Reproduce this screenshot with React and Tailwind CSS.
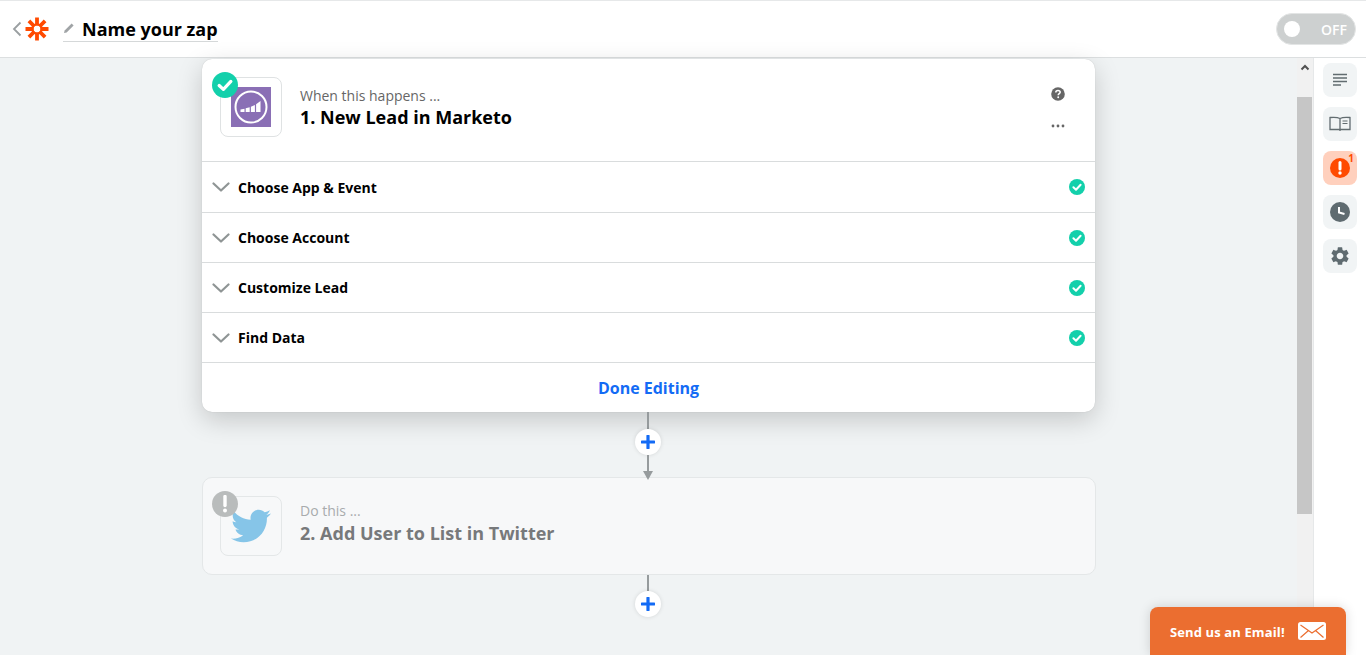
import { FaTwitter } from "react-icons/fa";
import { MdSettings } from "react-icons/md";

const font = { fontFamily: '"Open Sans", sans-serif' };

const ZapierLogo = () => (
  <svg width="24" height="24" viewBox="0 0 24 24">
    <g stroke="#ff4a00" strokeWidth="3.8">
      <path d="M12 0.5V8.5M12 15.5V23.5M0.5 12H8.5M15.5 12H23.5M3.9 3.9L9.5 9.5M14.5 14.5L20.1 20.1M20.1 3.9L14.5 9.5M9.5 14.5L3.9 20.1" />
    </g>
    <circle cx="12" cy="12" r="4.6" fill="none" stroke="#ff4a00" strokeWidth="2.4" />
  </svg>
);

const CheckBadge = ({ size = 16 }) => (
  <svg width={size} height={size} viewBox="0 0 16 16" className="block">
    <circle cx="8" cy="8" r="8" fill="#13d0ab" />
    <path d="M4.4 8.3L7 10.7L11.6 5.8" fill="none" stroke="#fff" strokeWidth="2" strokeLinecap="round" strokeLinejoin="round" />
  </svg>
);

const Chevron = () => (
  <svg width="18" height="10" viewBox="0 0 18 10" className="block">
    <path d="M1.5 1.5L9 8.5L16.5 1.5" fill="none" stroke="#8f9595" strokeWidth="2.2" strokeLinecap="round" strokeLinejoin="round" />
  </svg>
);

const MarketoLogo = () => (
  <div className="w-10 h-10 bg-[#8a6fb5] flex items-center justify-center">
    <svg width="34" height="34" viewBox="0 0 34 34">
      <circle cx="17" cy="17" r="15.5" fill="none" stroke="#fff" strokeWidth="2" />
      <path d="M6.5 19.5L10.5 18.8V22H6.5ZM11.7 18.3L15.7 17.2V22H11.7ZM16.9 16.8L20.9 15V22H16.9ZM22.1 14.2L26.5 11V22H22.1Z" fill="#fff" />
    </svg>
  </div>
);

const PlusButton = () => (
  <div className="w-[26px] h-[26px] shrink-0 rounded-full bg-white flex items-center justify-center shadow-[0_0_4px_rgba(0,0,0,0.12)]">
    <svg width="14" height="14" viewBox="0 0 14 14">
      <path d="M7 1V13M1 7H13" stroke="#136bf5" strokeWidth="3.2" strokeLinecap="round" />
    </svg>
  </div>
);

const SideButton = ({ active, children }) => (
  <div className={`relative w-[34px] h-[34px] rounded-lg flex items-center justify-center ${active ? "bg-[#ffd0bd]" : "bg-[#f1f4f5]"}`}>
    {children}
  </div>
);

const rows = ["Choose App & Event", "Choose Account", "Customize Lead", "Find Data"];

export default function App() {
  return (
    <div style={font} className="relative h-[655px] w-[1366px] overflow-hidden bg-white flex flex-col">
      {/* top bar */}
      <header className="h-[58px] shrink-0 bg-white border-t border-t-[#e6e8e9] border-b border-b-[#dcdfe0] flex items-center pl-[12px] pr-[10px]">
        <svg width="10" height="16" viewBox="0 0 10 16" className="mr-[3px]">
          <path d="M8.5 1.5L2 8L8.5 14.5" fill="none" stroke="#9a9fa1" strokeWidth="1.8" />
        </svg>
        <ZapierLogo />
        <div className="ml-[14px] flex items-center h-[26px] border-b border-[#d5d8d9]">
          <svg width="12" height="12" viewBox="0 0 12 12" className="mr-[7px] mt-[-2px]">
            <path d="M1 11L1.6 8.4L8.6 1.4L10.6 3.4L3.6 10.4Z" fill="#a0a4a6" />
          </svg>
          <span className="text-[18px] font-bold text-black leading-none">Name your zap</span>
        </div>
        <div className="ml-auto w-[80px] h-[32px] rounded-full bg-[#cdd0d0] border border-[#e3e5e5] flex items-center justify-between pl-[7px] pr-[8px]">
          <div className="w-[16px] h-[16px] rounded-full bg-white" />
          <span className="text-[14px] font-semibold text-white">OFF</span>
        </div>
      </header>

      <div className="flex flex-1 min-h-0">
        {/* canvas */}
        <main className="w-[1297px] shrink-0 bg-[#f0f3f4] flex flex-col items-start pl-[202px]">
          <section className="mt-[1px] w-[893px] h-[353px] shrink-0 bg-white rounded-[10px] shadow-[0_8px_26px_rgba(0,0,0,0.18),0_0_1px_rgba(0,0,0,0.2)] flex flex-col">
            <div className="h-[103px] shrink-0 flex items-start pl-[18px] pr-[30px] pt-[18px] border-b border-[#d9dcdd]">
              <div className="w-[62px] h-[60px] rounded-lg border border-[#dfe2e3] flex items-center justify-center relative">
                <MarketoLogo />
                <div className="absolute left-[-9px] top-[-6px] rounded-full">
                  <CheckBadge size={26} />
                </div>
              </div>
              <div className="ml-[18px] flex flex-col mt-[9px]">
                <span className="text-[14px] leading-[19px] text-[#666]">When this happens ...</span>
                <span className="text-[18px] leading-[25px] font-bold text-black">1. New Lead in Marketo</span>
              </div>
              <div className="ml-auto flex flex-col items-center gap-[23px] mt-[10px]">
                <svg width="14" height="14" viewBox="0 0 14 14" className="block">
                  <circle cx="7" cy="7" r="6.8" fill="#666" />
                  <path d="M4.8 5.4C4.8 4 5.8 3.4 7 3.4C8.3 3.4 9.2 4.1 9.2 5.2C9.2 6.6 7.2 6.7 7.2 8.2" fill="none" stroke="#fff" strokeWidth="1.5" />
                  <circle cx="7.2" cy="10.3" r="0.95" fill="#fff" />
                </svg>
                <svg width="14" height="4" viewBox="0 0 14 4" className="block">
                  <circle cx="2" cy="2" r="1.4" fill="#666" />
                  <circle cx="7" cy="2" r="1.4" fill="#666" />
                  <circle cx="12" cy="2" r="1.4" fill="#666" />
                </svg>
              </div>
            </div>
            {rows.map((row, i) => (
              <div key={row} className={`${i === 0 ? "h-[51px]" : "h-[50px]"} shrink-0 flex items-center px-[10px] border-b border-[#d9dcdd]`}>
                <Chevron />
                <span className="ml-[8px] text-[14px] font-bold text-black">{row}</span>
                <div className="ml-auto"><CheckBadge /></div>
              </div>
            ))}
            <div className="flex-1 flex items-center justify-center">
              <span className="text-[16px] font-bold text-[#136bf5]">Done Editing</span>
            </div>
          </section>

          {/* connector */}
          <div className="w-[892px] flex flex-col items-center shrink-0">
            <div className="w-[2px] h-[17px] bg-[#969b9d]" />
            <PlusButton />
            <div className="w-[2px] h-[16px] bg-[#969b9d]" />
            <div className="relative z-10 w-0 h-0 border-x-[5px] border-x-transparent border-t-[9px] border-t-[#969b9d]" />
          </div>

          <section className="mt-[-3px] w-[894px] h-[98px] shrink-0 bg-[#f7f8f9] rounded-[10px] border border-[#e4e7e8] flex items-start pl-[17px] pt-[18px]">
            <div className="w-[62px] h-[60px] rounded-lg border border-[#e4e7e8] flex items-center justify-center relative">
              <FaTwitter className="text-[#86c5e8] text-[40px]" />
              <div className="absolute left-[-9px] top-[-6px] w-[26px] h-[26px] rounded-full bg-[#b9bcbc] flex items-center justify-center">
                <svg width="6" height="18" viewBox="0 0 6 18">
                  <path d="M3 1.5V10.5" stroke="#fff" strokeWidth="3.4" strokeLinecap="round" />
                  <circle cx="3" cy="15.5" r="2" fill="#fff" />
                </svg>
              </div>
            </div>
            <div className="ml-[18px] flex flex-col mt-[5px]">
              <span className="text-[14px] leading-[20px] text-[#a8abad]">Do this ...</span>
              <span className="text-[18px] leading-[25px] font-bold text-[#77797b]">2. Add User to List in Twitter</span>
            </div>
          </section>

          <div className="w-[892px] flex flex-col items-center shrink-0">
            <div className="w-[2px] h-[16px] bg-[#969b9d]" />
            <PlusButton />
          </div>
        </main>

        {/* scrollbar */}
        <div className="w-[16px] shrink-0 bg-[#f1f1f1] flex flex-col">
          <div className="h-[39px] shrink-0 flex justify-center pt-[6px]">
            <svg width="10" height="7" viewBox="0 0 10 7" className="block">
              <path d="M1.5 5.5L5 2L8.5 5.5" fill="none" stroke="#505050" strokeWidth="2" />
            </svg>
          </div>
          <div className="h-[417px] w-[15px] shrink-0 bg-[#c6c6c6]" />
        </div>

        {/* side rail */}
        <aside className="flex-1 border-l border-[#e6e8e9] bg-white flex flex-col items-center gap-[10px] pt-[5px]">
          <SideButton>
            <svg width="16" height="14" viewBox="0 0 16 14">
              <path d="M1 1.5H15M1 5H15M1 8.5H15M1 12H9" stroke="#626c70" strokeWidth="1.5" />
            </svg>
          </SideButton>
          <SideButton>
            <svg width="22" height="16" viewBox="0 0 22 16">
              <path d="M11 2.5C9 1.4 4 1.2 1 1.5V13.5H11V15M11 2.5V13.5M11 2.5C13 1.4 18 1.2 21 1.5V13.5H11" fill="none" stroke="#626c70" strokeWidth="1.3" />
              <path d="M13.5 5H18.5M13.5 7.5H18.5" stroke="#626c70" strokeWidth="1.2" />
            </svg>
          </SideButton>
          <SideButton active>
            <svg width="20" height="20" viewBox="0 0 20 20">
              <circle cx="10" cy="10" r="10" fill="#ff4a00" />
              <path d="M10 4.5V11" stroke="#fff" strokeWidth="3" strokeLinecap="round" />
              <circle cx="10" cy="15" r="1.7" fill="#fff" />
            </svg>
            <span className="absolute right-[3px] top-[1px] text-[10px] leading-[12px] font-bold text-[#ff4a00]">1</span>
          </SideButton>
          <SideButton>
            <svg width="20" height="20" viewBox="0 0 20 20">
              <circle cx="10" cy="10" r="10" fill="#5f6b70" />
              <path d="M9 5V10.5L14.5 12" fill="none" stroke="#fff" strokeWidth="2" />
            </svg>
          </SideButton>
          <SideButton>
            <MdSettings className="text-[#5f6b70] text-[22px]" />
          </SideButton>
        </aside>
      </div>

      {/* chat widget */}
      <div className="absolute left-[1150px] top-[607px] w-[196px] h-[48px] bg-[#eb6e30] rounded-t-[8px] flex items-center pl-[20px] shadow-[0_0_12px_rgba(0,0,0,0.15)]">
        <span className="mt-[4px] text-[13px] font-bold text-white tracking-[0.12px]">Send us an Email!</span>
        <svg width="28" height="18" viewBox="0 0 28 18" className="ml-[13px]">
          <rect width="28" height="18" rx="2.5" fill="#fff" />
          <path d="M2.5 3L14 11L25.5 3M2.5 15.5L10.5 8.5M25.5 15.5L17.5 8.5" fill="none" stroke="#eb6e30" strokeWidth="1.2" />
        </svg>
      </div>
    </div>
  );
}
